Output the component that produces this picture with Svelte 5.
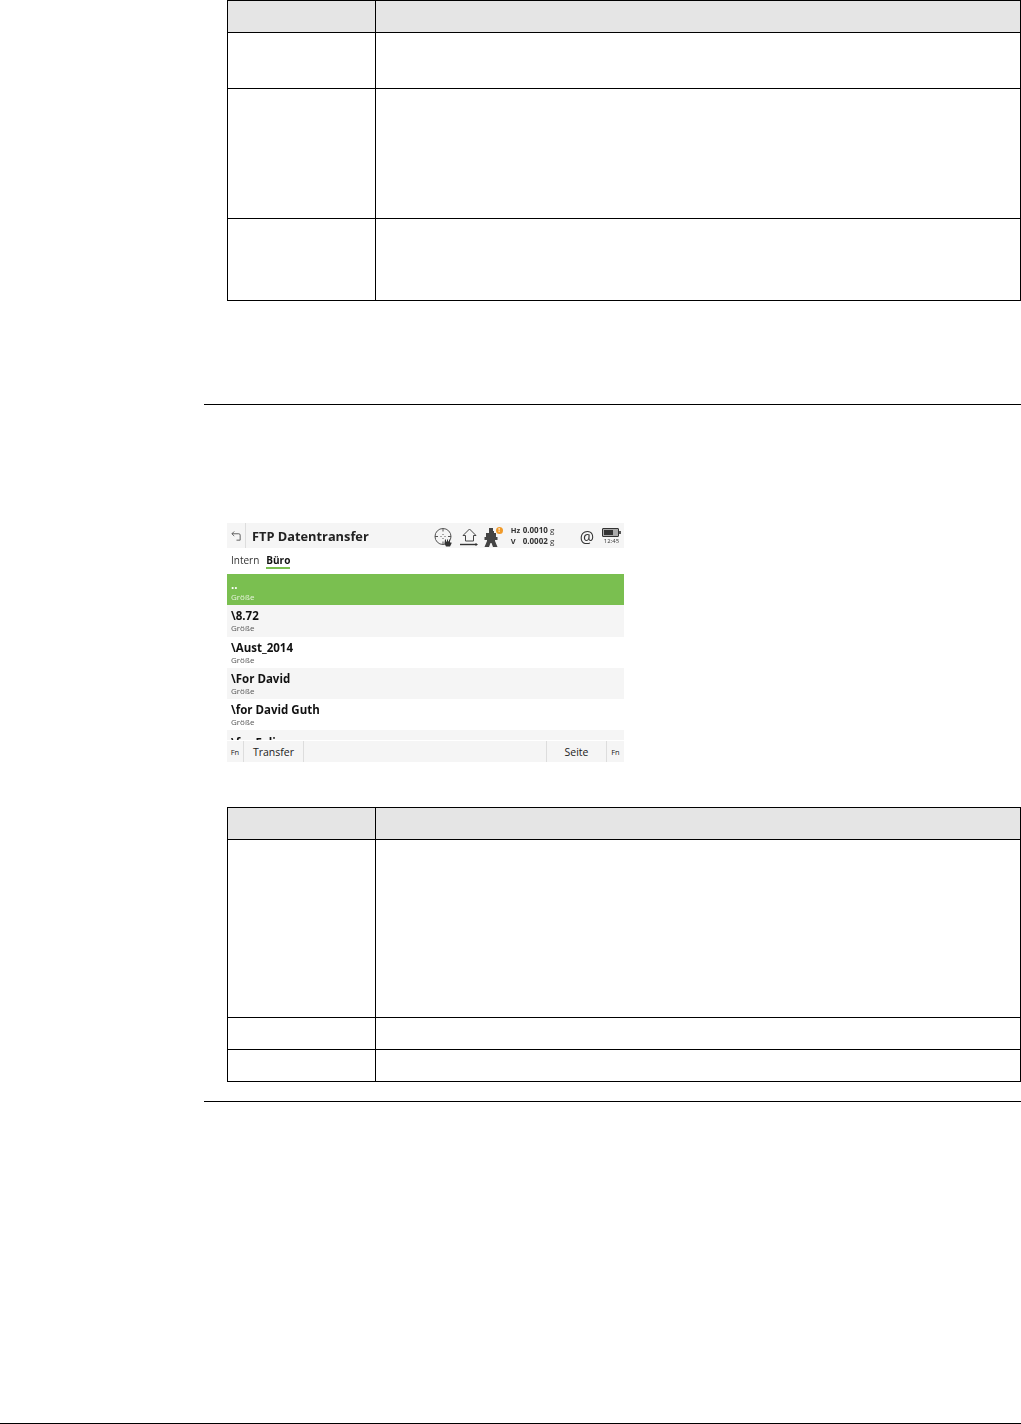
<script lang="ts">
	const topRows = [{ cls: 'h32 head' }, { cls: 'h56' }, { cls: 'h130' }, { cls: 'h82' }];
	const bottomRows = [{ cls: 'h32 head' }, { cls: 'h178' }, { cls: 'h32' }, { cls: 'h32' }];

	const files = [
		{ name: '..', selected: true },
		{ name: '\\8.72' },
		{ name: '\\Aust_2014' },
		{ name: '\\For David' },
		{ name: '\\for David Guth' }
	];
</script>

{#snippet table(rows)}
	<div class="table">
		{#each rows as row}
			<div class="row {row.cls}">
				<div class="cell first"></div>
				<div class="cell"></div>
			</div>
		{/each}
	</div>
{/snippet}

<div class="page">
	{@render table(topRows)}

	<hr class="rule rule-a" />

	<div class="screen">
		<header class="title-bar">
			<svg class="back" viewBox="0 0 12 12" fill="none" stroke="#555" stroke-width="1">
				<path d="M1 3h7.500a1.500 1.500 0 0 1 1.500 1.500V10H6" />
				<path d="M3.500 .5 1 3l2.500 2.500" />
			</svg>
			<span class="sep"></span>
			<h1>FTP Datentransfer</h1>
			<div class="status">
				<svg class="ico target" viewBox="0 0 19 20" fill="none" stroke="#555" stroke-width="1">
					<circle cx="9" cy="9.500" r="8" />
					<path d="M9 1.500v3M9 7v1M9 11v1M9 14.500v3M1 9.500h3M6.500 9.500h1M10.500 9.500h1M14 9.500h3" />
					<path d="M11 12.500h1v2h1v-2h1v2h1v-2h1v3h1.500v1l-1.500 3h-4l-1.500-3z" fill="#333" stroke="none" />
				</svg>
				<svg class="ico house" viewBox="0 0 20 20" fill="none" stroke="#444" stroke-width="1">
					<path d="M4 8.500 10.500 2l6.500 6.500h-2.500v5.500h-8V8.500z" />
					<path d="M1 17.500h17" stroke="#333" stroke-width="1.400" />
					<path d="M16.500 16 19 17.500 16.500 19z" fill="#333" stroke="none" />
				</svg>
				<div class="station">
					<svg class="ico instrument" viewBox="0 0 14 19">
						<path d="M5 0h4v3h1v2h2v4h1.500v3H11v1l2.500 6H9l-1.500-4h-1L5 19H.5L3 13v-1H.5V9H2V5h3z" fill="#444" />
					</svg>
					<span class="badge">!</span>
				</div>
				<div class="angles">
					<div><span class="k">Hz</span><b>0.0010</b> g</div>
					<div><span class="k">V</span><b>0.0002</b> g</div>
				</div>
				<span class="at">@</span>
				<div class="battery">
					<span class="cell-icon"><span class="charge"></span></span>
					<span class="time">12:45</span>
				</div>
			</div>
		</header>

		<nav class="tabs">
			<span>Intern</span>
			<span class="active">Büro</span>
		</nav>

		<div class="list">
			{#each files as file}
				<div class="item" class:selected={file.selected}>
					<div class="name">{file.name}</div>
					<div class="size">Größe</div>
				</div>
			{/each}
			<div class="item clipped"><div class="name">\for Felix</div></div>
		</div>

		<footer class="keys">
			<span class="key fn">Fn</span>
			<span class="key transfer">Transfer</span>
			<span class="gap"></span>
			<span class="key seite">Seite</span>
			<span class="key fn last">Fn</span>
		</footer>
	</div>

	{@render table(bottomRows)}

	<hr class="rule rule-b" />
	<hr class="rule rule-foot" />
</div>

<style>
	:global(body) {
		margin: 0;
		background: #fff;
	}

	.page {
		width: 1021px;
		height: 1424px;
		display: flex;
		flex-direction: column;
		font-family: 'Open Sans', 'Noto Sans', sans-serif;
		overflow: hidden;
	}

	.table {
		margin-left: 227px;
		width: 794px;
		box-sizing: border-box;
		border-top: 1px solid #000;
		border-left: 1px solid #000;
		border-right: 1px solid #000;
		flex: none;
	}

	.row {
		display: grid;
		grid-template-columns: 148px 1fr;
		box-sizing: border-box;
		border-bottom: 1px solid #000;
	}

	.cell.first {
		border-right: 1px solid #000;
	}

	.head {
		background: #e5e5e5;
	}

	.h32 { height: 32px; }
	.h56 { height: 56px; }
	.h82 { height: 82px; }
	.h130 { height: 130px; }
	.h178 { height: 178px; }

	.rule {
		border: none;
		height: 1px;
		background: #000;
		margin: 0;
		flex: none;
	}

	.rule-a {
		margin: 103px 0 118px 204px;
	}

	.rule-b {
		margin: 19px 0 0 204px;
	}

	.rule-foot {
		margin-top: auto;
	}

	/* the reference is a scaled-up raster, hence the slight blur */
	.screen {
		margin-left: 227px;
		width: 397px;
		height: 239px;
		flex: none;
		margin-bottom: 45px;
		display: flex;
		flex-direction: column;
		color: #111;
		overflow: hidden;
		filter: blur(0.35px);
	}

	.title-bar {
		height: 25px;
		background: #f5f5f5;
		display: flex;
		align-items: center;
		padding: 0 3px 0 4px;
		flex: none;
	}

	.back {
		width: 11px;
		height: 11px;
		margin-top: 2px;
	}

	.sep {
		width: 1px;
		height: 25px;
		background: #ddd;
		margin: 0 6px 0 3px;
	}

	h1 {
		margin: 0;
		padding-top: 2px;
		font-size: 12.8px;
		line-height: 25px;
		font-weight: 700;
		white-space: nowrap;
		color: #222;
	}

	.status {
		display: flex;
		align-items: center;
		margin-left: auto;
	}

	.ico {
		display: block;
	}

	.target {
		width: 19px;
		height: 20px;
		margin-top: 2px;
	}

	.house {
		width: 20px;
		height: 20px;
		margin-left: 6px;
		margin-top: 2px;
	}

	.station {
		position: relative;
		margin-left: 5px;
		width: 17px;
		height: 19px;
		margin-top: 3px;
	}

	.instrument {
		width: 14px;
		height: 19px;
	}

	.badge {
		position: absolute;
		top: -1px;
		right: -2px;
		width: 7px;
		height: 7px;
		border-radius: 50%;
		background: #f09a2a;
		color: #fff;
		font-size: 6px;
		line-height: 7px;
		font-weight: 700;
		text-align: center;
	}

	.angles {
		margin-left: 10px;
		font-size: 8px;
		line-height: 10.5px;
		color: #333;
		white-space: nowrap;
		width: 69px;
	}

	.angles b {
		font-weight: 700;
	}

	.k {
		display: inline-block;
		width: 12px;
		font-size: 7.5px;
		font-weight: 700;
	}

	.at {
		font-size: 16px;
		line-height: 20px;
		color: #333;
		margin-top: 2px;
	}

	.battery {
		margin-left: 8px;
		display: flex;
		flex-direction: column;
		align-items: flex-start;
		width: 19px;
		padding-top: 2px;
	}

	.cell-icon {
		display: block;
		position: relative;
		width: 13px;
		height: 5px;
		border: 1px solid #333;
		border-radius: 1px;
		padding: 1px;
		box-sizing: content-box;
		background: #aaa;
	}

	.cell-icon::after {
		content: '';
		position: absolute;
		top: 2px;
		right: -3px;
		width: 2px;
		height: 3px;
		background: #555;
	}

	.charge {
		display: block;
		width: 9px;
		height: 5px;
		background: #333;
	}

	.time {
		font-size: 6px;
		line-height: 7px;
		margin-top: 1px;
		color: #333;
		align-self: center;
	}

	.tabs {
		height: 26px;
		box-sizing: border-box;
		flex: none;
		display: flex;
		align-items: flex-start;
		gap: 7px;
		padding: 5px 0 0 4px;
		font-size: 10px;
		line-height: 14px;
		color: #333;
	}

	.tabs .active {
		font-weight: 700;
		color: #111;
		border-bottom: 2px solid #7abf50;
		height: 14px;
	}

	.list {
		flex: 1;
		min-height: 0;
		overflow: hidden;
	}

	.item {
		height: 31.25px;
		box-sizing: border-box;
		padding: 3px 0 0 4px;
	}

	.item:nth-child(even),
	.item.clipped {
		background: #f5f5f5;
	}

	.item.clipped {
		padding-top: 5px;
	}

	.item.selected {
		background: #7abf50;
		color: #fff;
	}

	.name {
		font-size: 11.5px;
		line-height: 16px;
		font-weight: 700;
		white-space: nowrap;
	}

	.size {
		font-size: 8px;
		line-height: 8px;
		color: #555;
	}

	.selected .size {
		color: #e8f4de;
	}

	.keys {
		margin-top: 1px;
		height: 21px;
		flex: none;
		background: #f5f5f5;
		display: flex;
		align-items: stretch;
	}

	.key {
		font-size: 10.5px;
		line-height: 22px;
		color: #222;
		text-align: center;
		box-sizing: border-box;
	}

	.fn {
		width: 17px;
		font-size: 7.5px;
		border-right: 1px solid #ddd;
	}

	.fn.last {
		border-right: none;
	}

	.transfer {
		width: 60px;
		border-right: 1px solid #ddd;
	}

	.gap {
		flex: 1;
	}

	.seite {
		width: 61px;
		border-left: 1px solid #ddd;
		border-right: 1px solid #ddd;
	}
</style>
